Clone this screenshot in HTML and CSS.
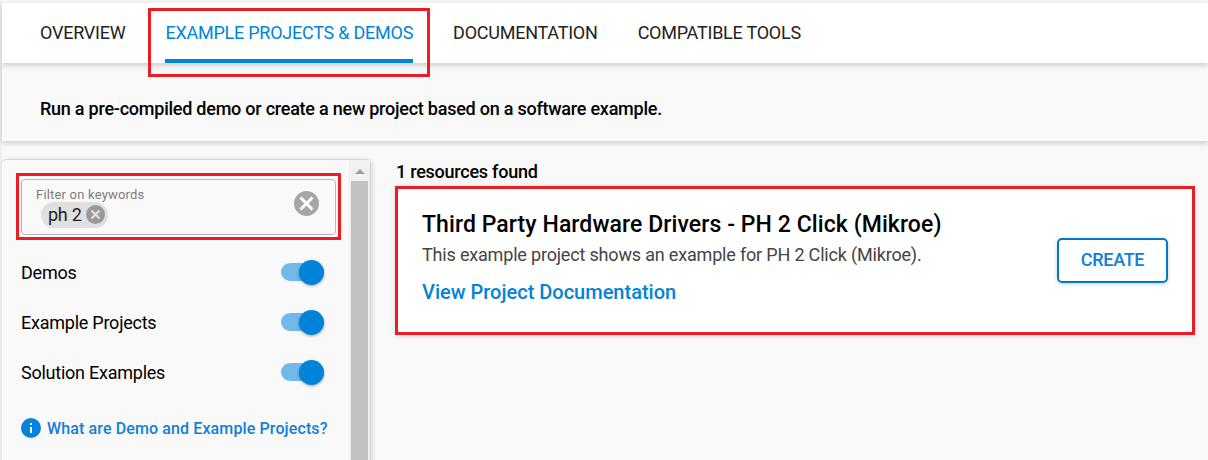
FILE: index.html
```html
<!DOCTYPE html>
<html lang="en">
<head>
<meta charset="utf-8">
<title>Example Projects &amp; Demos</title>
<link rel="stylesheet" href="styles.css">
</head>
<body>
<div class="page">
  <nav class="tabs">
    <a class="tab">OVERVIEW</a>
    <a class="tab tab-active">EXAMPLE PROJECTS &amp; DEMOS<span class="mark mark-tab"></span></a>
    <a class="tab">DOCUMENTATION</a>
    <a class="tab">COMPATIBLE TOOLS</a>
  </nav>
  <header class="banner"><span class="banner-text">Run a pre-compiled demo or create a new project based on a software example.</span></header>
  <main class="content">
    <aside class="sidebar">
      <div class="filters">
        <div class="keyword-box">
          <div class="keyword-main">
            <span class="keyword-label">Filter on keywords</span>
            <span class="chip"><span class="chip-text">ph 2</span>
              <svg class="chip-x" viewBox="0 0 20 20"><circle cx="10" cy="10" r="10" fill="#999"/><path d="M5.8 5.8l8.4 8.4M14.2 5.8l-8.4 8.4" stroke="#e0e0e0" stroke-width="2.4"/></svg>
            </span>
          </div>
          <svg class="clear" viewBox="0 0 20 20"><circle cx="10" cy="10" r="10" fill="#a6a6a6"/><path d="M5.2 5.2l9.6 9.6M14.8 5.2l-9.6 9.6" stroke="#fff" stroke-width="2.4"/></svg>
          <span class="mark mark-filter"></span>
        </div>
        <div class="option"><span>Demos</span><span class="toggle"><span class="knob"></span></span></div>
        <div class="option"><span>Example Projects</span><span class="toggle"><span class="knob"></span></span></div>
        <div class="option"><span>Solution Examples</span><span class="toggle"><span class="knob"></span></span></div>
        <a class="help">
          <svg class="info" viewBox="0 0 20 20"><circle cx="10" cy="10" r="10" fill="#0084da"/><path d="M9 5h2v2H9zM9 9h2v6H9z" fill="#fff"/></svg>
          <span class="help-text">What are Demo and Example Projects?</span>
        </a>
      </div>
      <div class="scrollbar">
        <svg class="arrow" viewBox="0 0 10 5"><path d="M0 5L5 0l5 5z" fill="#a0a0a0"/></svg>
        <div class="thumb"></div>
      </div>
    </aside>
    <section class="results">
      <div class="count">1 resources found</div>
      <article class="card">
        <div class="card-text">
          <h2 class="card-title">Third Party Hardware Drivers - PH 2 Click (Mikroe)</h2>
          <p class="card-desc">This example project shows an example for PH 2 Click (Mikroe).</p>
          <a class="card-link">View Project Documentation</a>
        </div>
        <button class="create">CREATE</button>
      </article>
    </section>
  </main>
</div>
</body>
</html>
```
FILE: styles.css
```css
* { box-sizing: border-box; }
body {
  margin: 0;
  height: 460px;
  overflow: hidden;
  background: #f9f9f9;
  color: #000;
  font-family: Roboto, "Liberation Sans", sans-serif;
  font-size: 18px;
  letter-spacing: -.24px;
  white-space: nowrap;
}
.page {
  height: 460px;
  border-left: 2px solid #f0f0f0;
  border-top: 3px solid #f7f7f7;
  display: flex;
  flex-direction: column;
}
.tabs {
  position: relative;
  z-index: 2;
  height: 60px;
  flex: none;
  display: flex;
  gap: 40px;
  padding-left: 38px;
  background: #fff;
  box-shadow: 0 2px 6px rgba(0, 0, 0, .2);
}
.tab {
  position: relative;
  height: 60px;
  line-height: 60px;
  color: #222;
}
.tab-active { color: #0084da; border-bottom: 4px solid #0084da; }
.mark { position: absolute; border: 3px solid #ed1c24; pointer-events: none; }
.mark-tab { left: -17px; right: -17px; top: 5px; height: 69px; }
.banner {
  position: relative;
  z-index: 1;
  height: 78px;
  flex: none;
  padding: 14px 0 0 38px;
  line-height: 63px;
  background: #f9f9f9;
  font-weight: 500;
  box-shadow: 0 2px 6px rgba(0, 0, 0, .2);
}
.content { flex: 1; min-height: 0; display: flex; gap: 25px; padding-top: 18px; }
.sidebar {
  width: 369px;
  height: 320px;
  flex: none;
  display: flex;
  justify-content: space-between;
  border-top: 1px solid #d8d8d8;
  border-right: 1px solid #d4d4d4;
  border-radius: 5px 5px 0 0;
  box-shadow: 1px 1px 5px rgba(0, 0, 0, .16);
}
.filters { width: 328px; padding: 19px 0 0 19px; }
.keyword-box {
  position: relative;
  width: 315px;
  height: 56px;
  display: flex;
  justify-content: space-between;
  padding: 8px 16px 0 14px;
  border: 1px solid #b8b8b8;
  border-radius: 4px;
}
.mark-filter { left: -6px; top: -7px; width: 325px; height: 67px; }
.keyword-main { display: flex; flex-direction: column; }
.keyword-label { height: 14px; line-height: 13px; font-size: 13px; color: #7c7c7c; letter-spacing: .19px; }
.chip {
  height: 26px;
  width: 67px;
  margin-left: 5px;
  display: flex;
  align-items: center;
  justify-content: space-between;
  padding: 0 3px 2px 7px;
  border-radius: 13px;
  background: #e0e0e0;
  color: #222;
}
.chip-x { width: 19px; height: 19px; }
.clear { width: 25px; height: 25px; margin-top: 3px; }
.option {
  height: 50px;
  width: 303px;
  display: flex;
  align-items: center;
  justify-content: space-between;
}
.keyword-box + .option { margin-top: 12px; }
.toggle {
  width: 43px;
  height: 18px;
  display: flex;
  align-items: center;
  justify-content: flex-end;
  border-radius: 9px;
  background: #70b9e9;
}
.knob {
  width: 25px;
  height: 25px;
  flex: none;
  border-radius: 50%;
  background: #0084da;
  box-shadow: 0 1px 3px rgba(0, 0, 0, .35);
}
.help {
  height: 20px;
  margin-top: 21px;
  display: flex;
  align-items: center;
  gap: 6px;
  color: #0f80d7;
  font-size: 16px;
  font-weight: 500;
  letter-spacing: .12px;
}
.info { width: 20px; height: 20px; }
.scrollbar {
  width: 21px;
  display: flex;
  flex-direction: column;
  align-items: center;
  padding-top: 9px;
  background: #f1f1f1;
}
.arrow { width: 10px; height: 5px; margin-bottom: 7px; flex: none; }
.thumb { width: 17px; flex: 1; background: #c1c1c1; }
.results { width: 800px; flex: none; margin-left: -1px; }
.count { height: 27px; line-height: 25px; padding-left: 1px; font-weight: 500; }
.card {
  width: 800px;
  height: 149px;
  display: flex;
  justify-content: space-between;
  padding: 22px 24px 0;
  background: #fff;
  border: 3px solid #ed1c24;
  box-shadow: 0 1px 6px rgba(0, 0, 0, .12);
}
.card-title { margin: 0; height: 32px; line-height: 27px; font-size: 23px; font-weight: 500; letter-spacing: .08px; }
.card-desc { margin: 0; height: 31px; line-height: 24px; color: #444; letter-spacing: -.18px; }
.card-link { display: block; line-height: 37px; font-size: 20px; font-weight: 500; color: #0084da; letter-spacing: 0; }
.create {
  width: 111px;
  height: 45px;
  margin-top: 27px;
  padding: 0 0 2px;
  border: 2px solid #007bc9;
  border-radius: 5px;
  background: #fff;
  color: #0f80d7;
  font: 500 18px Roboto, sans-serif;
  letter-spacing: -.3px;
  box-shadow: 0 1px 4px rgba(0, 0, 0, .2);
}
```
